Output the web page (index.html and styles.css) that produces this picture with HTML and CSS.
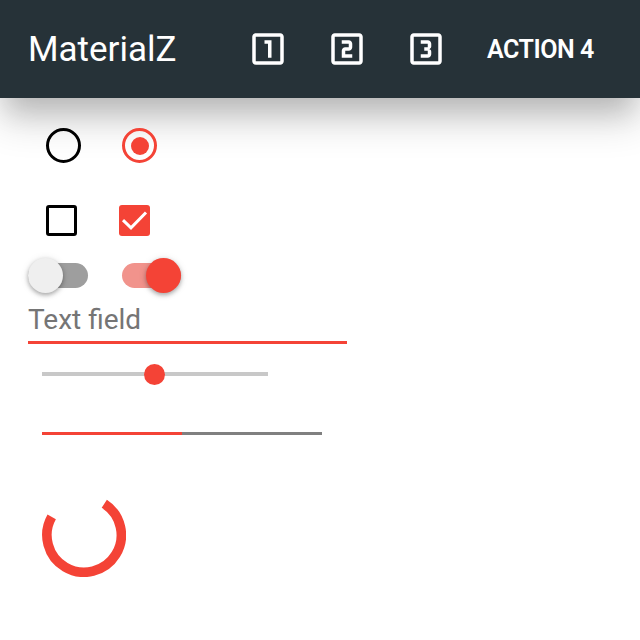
FILE: index.html
```html
<!DOCTYPE html>
<html lang="en">
<head>
<meta charset="utf-8">
<title>MaterialZ</title>
<link rel="stylesheet" href="styles.css">
</head>
<body>
<header class="app-bar">
  <h1 class="title">MaterialZ</h1>
  <nav class="actions">
    <svg class="icon" viewBox="0 0 24 24"><path d="M19 3H5c-1.1 0-2 .9-2 2v14c0 1.1.9 2 2 2h14c1.1 0 2-.9 2-2V5c0-1.1-.9-2-2-2zm0 16H5V5h14v14zm-7-2h2V7h-4v2h2v8z"/></svg>
    <svg class="icon" viewBox="0 0 24 24"><path d="M19 3H5c-1.1 0-2 .9-2 2v14c0 1.1.9 2 2 2h14c1.1 0 2-.9 2-2V5c0-1.1-.9-2-2-2zm0 16H5V5h14v14zm-4-8V9c0-1.1-.9-2-2-2H9v2h4v2h-2c-1.1 0-2 .9-2 2v4h6v-2h-4v-2h2c1.1 0 2-.9 2-2z"/></svg>
    <svg class="icon" viewBox="0 0 24 24"><path d="M19 3H5c-1.1 0-2 .9-2 2v14c0 1.1.9 2 2 2h14c1.1 0 2-.9 2-2V5c0-1.1-.9-2-2-2zm0 16H5V5h14v14zm-4-4v-1.5c0-.83-.67-1.5-1.5-1.5.83 0 1.5-.67 1.5-1.5V9c0-1.1-.9-2-2-2H9v2h4v2h-2v2h2v2H9v2h4c1.1 0 2-.9 2-2z"/></svg>
    <span class="action-text">ACTION 4</span>
  </nav>
</header>
<main class="content">
  <div class="row radios">
    <span class="radio"></span>
    <span class="radio checked"></span>
  </div>
  <div class="row checks">
    <span class="check"></span>
    <span class="check checked"><svg viewBox="0 0 31 31"><path d="M4 15.2 12 22.8 27 7.5"/></svg></span>
  </div>
  <div class="row switches">
    <span class="switch"><span class="thumb"></span></span>
    <span class="switch on"><span class="thumb"></span></span>
  </div>
  <input class="field" type="text" placeholder="Text field">
  <div class="slider"><span class="knob"></span></div>
  <div class="progress"><div class="bar"></div></div>
  <svg class="spinner" viewBox="0 0 84 84"><path d="M9.7 23.8A37.2 37.2 0 1 0 62.3 10.8"/></svg>
</main>
</body>
</html>
```
FILE: styles.css
```css
* { box-sizing: border-box; }
body {
  margin: 0;
  height: 640px;
  overflow: hidden;
  background: #fff;
  font-family: Roboto, "Liberation Sans", sans-serif;
}
.app-bar {
  display: flex;
  align-items: center;
  justify-content: space-between;
  height: 98px;
  padding: 0 45px 0 28px;
  background: #263238;
  color: #fff;
  box-shadow: 0 18px 26px -7px rgba(0,0,0,.16), 0 24px 38px 0 rgba(0,0,0,.16);
}
.title { margin: 0; font-size: 35px; font-weight: 400; }
.actions { display: flex; align-items: center; gap: 37px; }
.icon { width: 42px; height: 42px; fill: #fff; }
.action-text { width: 108px; margin-left: 3px; padding-top: 2px; font-size: 25px; line-height: 30px; font-weight: 600; letter-spacing: -.45px; white-space: nowrap; }
.content {
  display: flex;
  flex-direction: column;
  align-items: flex-start;
  padding: 30px 0 0 28px;
}
.row { display: flex; }
.radios { gap: 41px; margin-left: 18px; }
.radio {
  display: grid;
  place-items: center;
  width: 35px;
  height: 35px;
  border: 3px solid #000;
  border-radius: 50%;
}
.radio.checked { border-color: #f44336; }
.radio.checked::after {
  content: "";
  width: 18px;
  height: 18px;
  border-radius: 50%;
  background: #f44336;
}
.checks { gap: 42px; margin: 42px 0 0 18px; }
.check {
  width: 31px;
  height: 31px;
  border: 3px solid #000;
  border-radius: 3px;
}
.check.checked { border: 0; background: #f44336; }
.check svg { display: block; fill: none; stroke: #fff; stroke-width: 3; }
.switches { gap: 34px; margin-top: 22px; }
.switch {
  display: flex;
  align-items: center;
  width: 60px;
  height: 25px;
  margin: 5px 0;
  border-radius: 12.5px;
  background: #9e9e9e;
}
.thumb {
  flex: none;
  width: 35px;
  height: 35px;
  border-radius: 50%;
  background: #efefef;
  box-shadow: 0 2px 4px rgba(0,0,0,.3), 0 1px 8px rgba(0,0,0,.1);
}
.switch.on { width: 59.4px; justify-content: flex-end; background: #f1938c; }
.switch.on .thumb { background: #f44336; }
.field {
  width: 319px;
  height: 51px;
  padding: 4px 0 0;
  border: 0;
  border-bottom: 3px solid #f44336;
  outline: 0;
  background: transparent;
  font: 400 28px Roboto, "Liberation Sans", sans-serif;
}
.field::placeholder { color: #757575; }
.slider {
  display: flex;
  align-items: center;
  width: 226px;
  height: 4px;
  margin: 28px 0 0 14px;
  padding-left: 102px;
  background: #c8c8c8;
}
.knob { flex: none; width: 21px; height: 21px; border-radius: 50%; background: #f44336; }
.progress { width: 280px; height: 3px; margin: 56px 0 0 14px; background: #808080; }
.bar { width: 50%; height: 3px; background: #f44336; }
.spinner { width: 84px; height: 84px; margin: 58px 0 0 14px; fill: none; stroke: #f44336; stroke-width: 9.6; }
```
